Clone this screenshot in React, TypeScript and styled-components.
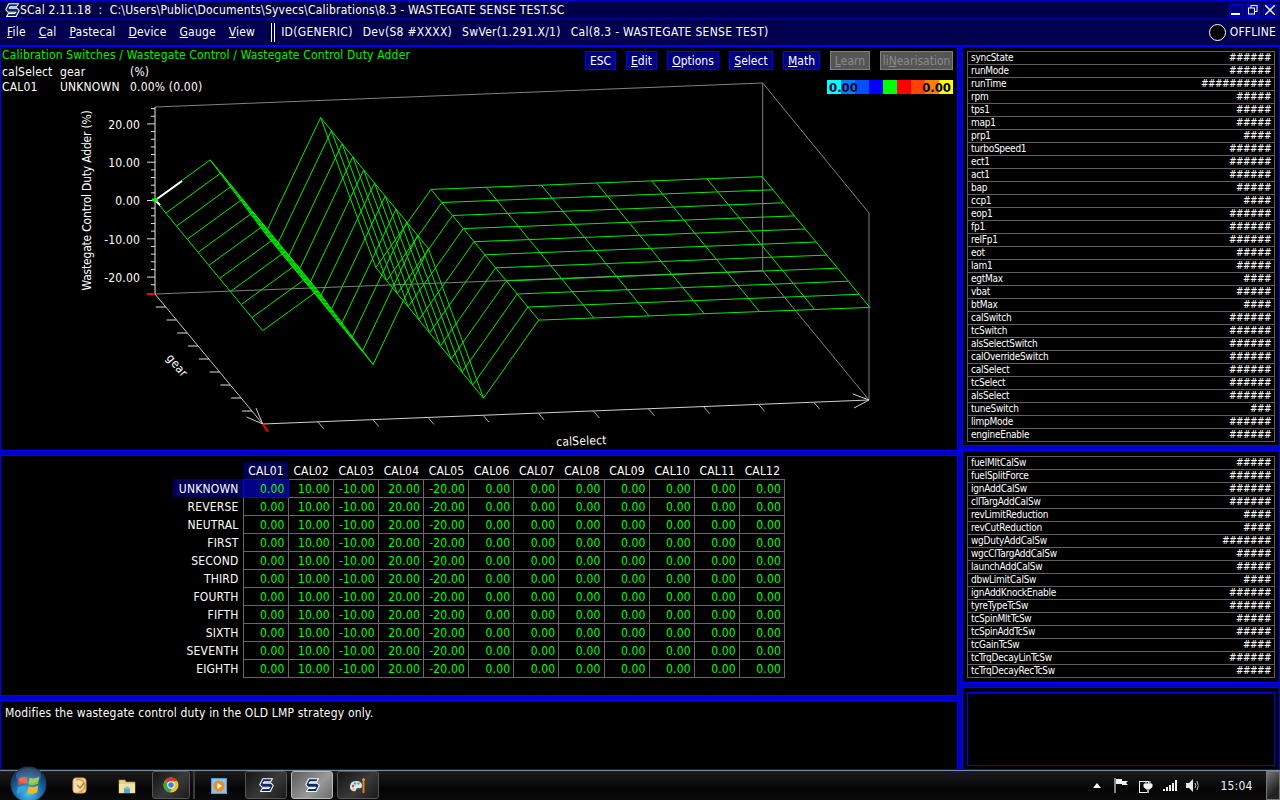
import React from "react";
import styled, { createGlobalStyle } from "styled-components";

const GlobalStyle = createGlobalStyle`
  html, body {
    margin: 0;
    padding: 0;
    background: #000;
  }
  body {
    font-family: "DejaVu Sans", "Liberation Sans", sans-serif;
    font-stretch: condensed;
    font-size: 12px;
    letter-spacing: 0.18px;
    color: #fff;
  }
`;

const Page = styled.div`
  width: 1280px;
  height: 800px;
  overflow: hidden;
  display: flex;
  flex-direction: column;
  background: #000;
`;

const TitleBar = styled.div`
  height: 19px;
  box-sizing: border-box;
  display: flex;
  align-items: center;
  padding: 1px 3px 0 5px;
  background: #000048;
  border-top: 1px solid #0000d0;
  border-bottom: 1px solid #0000a8;
`;

const TitleText = styled.span`
  white-space: pre;
  line-height: 16px;
  letter-spacing: 0.22px;
`;

const WindowButtons = styled.div`
  margin-left: auto;
  display: flex;
  gap: 3px;
`;

const WindowButton = styled.div`
  width: 14px;
  height: 13px;
  background: #000080;
  border: 1px solid #0000e0;
  box-sizing: border-box;
  display: flex;
  align-items: center;
  justify-content: center;
`;

const MenuBar = styled.div`
  height: 27px;
  box-sizing: border-box;
  display: flex;
  align-items: center;
  padding: 0 4px 0 7px;
  background: #00004e;
  border-bottom: 1px solid #0000e0;
`;

const MenuItems = styled.div`
  display: flex;
  gap: 13px;
`;

const MenuItem = styled.span`
  line-height: 16px;
`;

const MenuDivider = styled.div`
  width: 1px;
  height: 19px;
  margin: 0 6px 0 16px;
  border-left: 1px solid #fff;
  border-right: 1px solid #fff;
  padding-left: 1px;
`;

const StatusItems = styled.div`
  display: flex;
  gap: 10px;
  letter-spacing: 0.3px;
`;

const OnlineState = styled.div`
  margin-left: auto;
  display: flex;
  align-items: center;
  gap: 4px;
`;

const StateLamp = styled.div`
  width: 17px;
  height: 17px;
  box-sizing: border-box;
  border-radius: 50%;
  background: #000;
  border: 1px solid #fff;
`;

const Workspace = styled.div`
  height: 724px;
  display: flex;
  gap: 4px;
  background: #0000c8;
`;

const Column = styled.div<{ $width: number }>`
  width: ${(p) => p.$width}px;
  display: flex;
  flex-direction: column;
  gap: 4px;
`;

const Panel = styled.div<{ $height: number }>`
  height: ${(p) => p.$height}px;
  box-sizing: border-box;
  border: 1px solid #0000ff;
  background: #000;
`;

const ChartPanel = styled(Panel)`
  display: grid;
  grid-template-columns: 1fr;
  grid-template-rows: 1fr;
  & > * {
    grid-area: 1 / 1;
  }
`;

const ChartSvg = styled.svg`
  display: block;
  width: 956px;
  height: 403px;
`;

const ChartOverlay = styled.div`
  display: flex;
  justify-content: space-between;
  align-items: flex-start;
  padding: 0 4px 0 1px;
`;

const PathBlock = styled.div`
  display: flex;
  flex-direction: column;
  padding-top: 1px;
`;

const PathTitle = styled.div`
  color: #00f000;
  line-height: 14px;
  margin-bottom: 3px;
`;

const InfoGrid = styled.div`
  display: grid;
  grid-template-columns: 58px 70px auto;
  line-height: 15px;
`;

const ToolBlock = styled.div`
  display: flex;
  flex-direction: column;
  align-items: flex-end;
  padding-top: 4px;
  gap: 10px;
`;

const Toolbar = styled.div`
  display: flex;
  gap: 10px;
`;

const ToolButton = styled.div<{ $w: number; $off?: boolean }>`
  width: ${(p) => p.$w}px;
  height: 19px;
  box-sizing: border-box;
  display: flex;
  align-items: center;
  justify-content: center;
  letter-spacing: 0;
  background: ${(p) => (p.$off ? "#555" : "#000080")};
  border: 1px solid ${(p) => (p.$off ? "#808080" : "#0000ff")};
  color: ${(p) => (p.$off ? "#8c8c8c" : "#fff")};
`;

const LegendBar = styled.div`
  width: 126px;
  height: 14px;
  display: flex;
  justify-content: space-between;
  align-items: center;
  padding: 0 2px;
  box-sizing: border-box;
  color: #000030;
  font-weight: bold;
  font-size: 13px;
  letter-spacing: 0;
  background: linear-gradient(
    to right,
    #00ffff 0 14px,
    #0080ff 14px 28px,
    #0050ff 28px 42px,
    #0000ff 42px 56px,
    #00ff00 56px 70px,
    #ff0000 70px 84px,
    #ff4400 84px 98px,
    #ff8000 98px 112px,
    #ffff00 112px 126px
  );
`;

const AxisLabel = styled.text`
  fill: #fff;
  font-family: "DejaVu Sans", "Liberation Sans", sans-serif;
  font-stretch: condensed;
  font-size: 12px;
`;

const VerticalLabel = styled(AxisLabel)`
  letter-spacing: -0.2px;
`;

const TablePanel = styled(Panel)`
  display: flex;
  justify-content: center;
  padding-top: 6px;
`;

const CalTable = styled.table`
  width: 612px;
  height: 215px;
  table-layout: fixed;
  border-collapse: collapse;
  font-size: 12px;
`;

const CornerCell = styled.th`
  width: 70px;
  height: 17px;
  padding: 0;
`;

const ColHead = styled.th<{ $active?: boolean }>`
  padding: 1px 0 0 1px;
  font-weight: normal;
  text-align: center;
  background: ${(p) => (p.$active ? "#000050" : "transparent")};
`;

const RowHead = styled.th<{ $active?: boolean }>`
  padding: 1px 4px 0 0;
  height: 17px;
  font-weight: normal;
  text-align: right;
  background: ${(p) => (p.$active ? "#000058" : "transparent")};
`;

const ValueCell = styled.td<{ $active?: boolean }>`
  padding: 1px 3px 0 0;
  text-align: right;
  color: #00ff00;
  border: 1px solid ${(p) => (p.$active ? "#0000ff" : "#686868")};
  background: ${(p) => (p.$active ? "#000088" : "transparent")};
`;

const DescPanel = styled(Panel)`
  padding: 4px;
  line-height: 16px;
`;

const ListPanel = styled(Panel)<{ $top: number }>`
  padding: ${(p) => p.$top}px 4px 0;
`;

const GaugeList = styled.div`
  border: 1px solid #606060;
  border-bottom: none;
`;

const GaugeRow = styled.div`
  height: 13px;
  box-sizing: border-box;
  border-bottom: 1px solid #606060;
  display: flex;
  justify-content: space-between;
  align-items: center;
  padding: 0 3px 0 3px;
  font-size: 10px;
  line-height: 12px;
  letter-spacing: -0.25px;
`;

const GaugeHash = styled.span`
  letter-spacing: -0.55px;
`;

const EmptyPanel = styled(Panel)`
  padding: 4px 4px 0;
`;

const EmptyBox = styled.div`
  height: 74px;
  box-sizing: border-box;
  border: 1px solid #0000ff;
`;

const Taskbar = styled.div`
  height: 30px;
  box-sizing: border-box;
  display: flex;
  align-items: stretch;
  background: linear-gradient(to bottom, #1c1c20, #050505 60%, #0a0a0a);
  border-top: 1px solid #7d8aa8;
`;

const OrbSlot = styled.div`
  width: 56px;
  display: flex;
  align-items: center;
  justify-content: center;
  box-sizing: border-box;
`;

const PinSlot = styled.div<{ $w: number }>`
  width: ${(p) => p.$w}px;
  display: flex;
  align-items: center;
  justify-content: center;
`;

const TaskButton = styled.div<{ $w: number; $active?: boolean; $gap?: number }>`
  width: ${(p) => p.$w}px;
  margin-left: ${(p) => p.$gap ?? 0}px;
  margin-bottom: 1px;
  box-sizing: border-box;
  display: flex;
  align-items: center;
  justify-content: center;
  border: 1px solid ${(p) => (p.$active ? "#bbb" : "#555")};
  border-radius: 3px;
  background: ${(p) =>
    p.$active
      ? "linear-gradient(135deg, #5c5c5c, #9a9a9a 60%, #6a6a6a)"
      : "linear-gradient(135deg, #141414, #3a3a3a 55%, #1a1a1a)"};
`;

const TaskSeparator = styled.div`
  width: 2px;
  margin: 0 0 1px 3px;
  background: #3a3a3a;
`;

const Tray = styled.div`
  margin-left: auto;
  display: flex;
  align-items: center;
`;

const TrayIcon = styled.div<{ $w: number }>`
  width: ${(p) => p.$w}px;
  display: flex;
  align-items: center;
  justify-content: center;
`;

const Clock = styled.div`
  width: 62px;
  box-sizing: border-box;
  padding-left: 3px;
  text-align: center;
  font-size: 12px;
  color: #f4f4f4;
`;

const ShowDesktop = styled.div`
  width: 14px;
  align-self: stretch;
  box-sizing: border-box;
  border: 1px solid #777;
  background: linear-gradient(135deg, #777, #222 70%);
`;

const gears = ["UNKNOWN", "REVERSE", "NEUTRAL", "FIRST", "SECOND", "THIRD", "FOURTH", "FIFTH", "SIXTH", "SEVENTH", "EIGHTH"];
const cals = ["CAL01", "CAL02", "CAL03", "CAL04", "CAL05", "CAL06", "CAL07", "CAL08", "CAL09", "CAL10", "CAL11", "CAL12"];
const adders = [0, 10, -10, 20, -20, 0, 0, 0, 0, 0, 0, 0];

const gaugesTop: [string, number][] = [
  ["syncState", 6], ["runMode", 6], ["runTime", 10], ["rpm", 5], ["tps1", 5], ["map1", 5],
  ["prp1", 4], ["turboSpeed1", 6], ["ect1", 6], ["act1", 6], ["bap", 5], ["ccp1", 4],
  ["eop1", 6], ["fp1", 6], ["relFp1", 6], ["eot", 5], ["lam1", 5], ["egtMax", 4],
  ["vbat", 5], ["btMax", 4], ["calSwitch", 6], ["tcSwitch", 6], ["alsSelectSwitch", 6],
  ["calOverrideSwitch", 6], ["calSelect", 6], ["tcSelect", 6], ["alsSelect", 6],
  ["tuneSwitch", 3], ["limpMode", 6], ["engineEnable", 6],
];

const gaugesBottom: [string, number][] = [
  ["fuelMltCalSw", 5], ["fuelSplitForce", 6], ["ignAddCalSw", 6], ["cllTargAddCalSw", 6],
  ["revLimitReduction", 4], ["revCutReduction", 4], ["wgDutyAddCalSw", 7], ["wgcClTargAddCalSw", 5],
  ["launchAddCalSw", 5], ["dbwLimitCalSw", 4], ["ignAddKnockEnable", 6], ["tyreTypeTcSw", 6],
  ["tcSpinMltTcSw", 5], ["tcSpinAddTcSw", 5], ["tcGainTcSw", 4], ["tcTrqDecayLinTcSw", 6],
  ["tcTrqDecayRecTcSw", 5],
];

// screen position of a map cell in the fixed 3d view
const project = (i: number, j: number, v: number) =>
  `${(155 + 55.2 * i + 10.77 * j).toFixed(1)},${(200 - 2.12 * i + 13.07 * j - 3.8 * v).toFixed(1)}`;

const Surface = () => (
  <g fill="none" stroke="#00ec00" strokeWidth={1}>
    {gears.map((_, j) => (
      <polyline key={j} points={adders.map((v, i) => project(i, j, v)).join(" ")} />
    ))}
    {adders.map((v, i) => (
      <polyline key={i} points={gears.map((_, j) => project(i, j, v)).join(" ")} />
    ))}
  </g>
);

const Chart = () => {
  const minor: number[] = [];
  for (let k = -12; k <= 12; k++) minor.push(k);
  return (
    <ChartSvg viewBox="1 47 956 403">
      <g fill="none" stroke="#808080" strokeWidth={1}>
        <path d="M155 107L762.7 83V270.7L155 294" />
        <path d="M762.7 83L869 213V400L762.7 270.7" />
      </g>
      <Surface />
      <path d="M155 107V294" stroke="#e8e8e8" strokeWidth={1} />
      <path d="M155 294L262.7 424" stroke="#c8c8c8" strokeWidth={1} />
      <path d="M262.7 424L869 400" stroke="#d0d0d0" strokeWidth={1} />
      <g stroke="#e0e0e0" strokeWidth={1}>
        {minor.map((k) => {
          const y = 200.5 + k * 7.66;
          if (y < 108 || y > 292) return null;
          return <line key={k} x1={k % 5 === 0 ? 147 : 151} x2={155} y1={y} y2={y} />;
        })}
        {[1, 2, 3, 4, 5, 6, 7, 8, 9].map((j) => {
          const x = 155 + 10.77 * j;
          const y = 294 + 13 * j;
          return <line key={j} x1={x - 10} x2={x} y1={y} y2={y} />;
        })}
      </g>
      <g stroke="#b0b0b0" strokeWidth={1}>
        {[1, 2, 3, 4, 5, 6, 7, 8, 9, 10].map((i) => {
          const x = 262.7 + 55.1 * i;
          const y = 424 - 2.18 * i;
          return <line key={i} x1={x} x2={x + 6} y1={y} y2={y + 7} />;
        })}
      </g>
      <path d="M256 408L262.7 424L246.7 417" fill="none" stroke="#d0d0d0" strokeWidth={1} />
      <path d="M853 394L869 400L854 408" fill="none" stroke="#d0d0d0" strokeWidth={1} />
      <path d="M147 294H155" stroke="#ff0000" strokeWidth={2} />
      <path d="M262.7 424L268 431.6" stroke="#ff0000" strokeWidth={2} />
      <path d="M157 199L182 181M155 200L160 205" stroke="#fff" strokeWidth={2} />
      <path d="M152 200H158" stroke="#00ff00" strokeWidth={3} />
      {[
        ["20.00", 124],
        ["10.00", 162],
        ["0.00", 200],
        ["-10.00", 239],
        ["-20.00", 277],
      ].map(([label, y]) => (
        <AxisLabel key={label} x={140} y={Number(y) + 4.5} textAnchor="end">
          {label}
        </AxisLabel>
      ))}
      <VerticalLabel textAnchor="middle" transform="translate(91 200.5) rotate(-90)">
        Wastegate Control Duty Adder (%)
      </VerticalLabel>
      <AxisLabel textAnchor="middle" transform="translate(174 368) rotate(50)">
        gear
      </AxisLabel>
      <AxisLabel textAnchor="middle" transform="translate(581.5 445) rotate(-2)">
        calSelect
      </AxisLabel>
    </ChartSvg>
  );
};

const SLogo = ({ size = 15 }: { size?: number }) => (
  <svg width={size} height={size * 0.95} viewBox="0 0 20 19">
    <path
      d="M5 1H18L15.5 5H7L5.5 6.8H16L19 10L15 18H2L4.5 14H13L14.5 12.2H4L1 9Z"
      fill="#0b2a66"
      stroke="#fff"
      strokeWidth={1.4}
      strokeLinejoin="round"
    />
  </svg>
);

const WinOrb = () => (
  <svg width={37} height={37} viewBox="0 0 38 38" style={{ marginTop: -3 }}>
    <defs>
      <radialGradient id="orb" cx="50%" cy="75%" r="70%">
        <stop offset="0" stopColor="#4fc6f0" />
        <stop offset="0.55" stopColor="#1a6aa8" />
        <stop offset="1" stopColor="#0d2c52" />
      </radialGradient>
    </defs>
    <circle cx="19" cy="19" r="18" fill="url(#orb)" stroke="#27405f" />
    <path d="M9 13Q13 10 18 12L17 19Q12 17 8 20Z" fill="#e8502a" />
    <path d="M20 12Q25 14 30 11L29 18Q24 21 19 19Z" fill="#8cc63f" />
    <path d="M8 22Q12 19 17 21L16 28Q11 26 7 29Z" fill="#3aa0e0" />
    <path d="M19 21Q24 23 29 20L28 27Q23 30 18 28Z" fill="#f7b52c" />
    <ellipse cx="19" cy="10" rx="13" ry="8" fill="#fff" opacity="0.16" />
  </svg>
);

const TaskIcon = () => (
  <svg width={16} height={18} viewBox="0 0 16 18">
    <rect x="1" y="1" width="13" height="15" rx="3" fill="#f6dcae" stroke="#d9a25c" />
    <path d="M4 3Q11 1 13 8Q13 14 7 15" fill="none" stroke="#e09a3c" strokeWidth={1.6} />
    <path d="M5 8L8 11L12 6" fill="none" stroke="#b47a30" strokeWidth={1.4} />
  </svg>
);

const FolderIcon = () => (
  <svg width={18} height={16} viewBox="0 0 18 16">
    <path d="M1 2H7L8 4H17V15H1Z" fill="#e8cf7e" stroke="#b79b4e" strokeWidth={0.6} />
    <rect x="1" y="6" width="16" height="9" fill="#f3e3a0" />
    <path d="M6 15V11H12V15Z" fill="#5ba3d0" />
    <path d="M5 11L9 8L13 11Z" fill="#7cc0e6" />
  </svg>
);

const ChromeIcon = () => (
  <svg width={16} height={16} viewBox="0 0 16 16">
    <circle cx="8" cy="8" r="7.5" fill="#e8c32c" />
    <path d="M8 .5A7.5 7.5 0 0 1 14.5 4.2H8A3.8 3.8 0 0 0 4.7 6.1L2.3 3.1A7.5 7.5 0 0 1 8 .5Z" fill="#d9382c" />
    <path d="M2.3 3.1L5.6 9.8A3.8 3.8 0 0 0 9 11.7L6.8 15.4A7.5 7.5 0 0 1 2.3 3.1Z" fill="#3aa548" />
    <circle cx="8" cy="8" r="3.7" fill="#fff" />
    <circle cx="8" cy="8" r="2.8" fill="#3f7fe0" />
  </svg>
);

const MediaIcon = () => (
  <svg width={16} height={16} viewBox="0 0 16 16">
    <rect x=".5" y=".5" width="15" height="15" fill="#8cc4e8" stroke="#5a9ccc" />
    <circle cx="8" cy="8" r="5.5" fill="#f28a1c" />
    <path d="M6.3 5L11 8L6.3 11Z" fill="#fff" />
  </svg>
);

const PaletteIcon = () => (
  <svg width={18} height={17} viewBox="0 0 18 17">
    <path d="M1 10Q1 4 7 4Q13 4 13 9Q13 12 9 11Q7 11 7 13Q6 15 4 14Q1 13 1 10Z" fill="#dfe8f2" />
    <circle cx="4" cy="9" r="1.2" fill="#d03a2c" />
    <circle cx="6" cy="6.5" r="1.2" fill="#3a9ad0" />
    <circle cx="9.5" cy="6.5" r="1.2" fill="#6ab040" />
    <circle cx="4.5" cy="12" r="1.1" fill="#e8b830" />
    <path d="M14.5 1V16" stroke="#e8842c" strokeWidth={1.8} />
    <path d="M13 3H16" stroke="#c8a070" strokeWidth={1.4} />
  </svg>
);

const FlagIcon = () => (
  <svg width={15} height={15} viewBox="0 0 15 15">
    <path d="M1 0V15" stroke="#fff" />
    <path d="M2 1H8V3H14L12 5L14 7H8V6H2Z" fill="#f0f0f0" />
  </svg>
);

const PowerIcon = () => (
  <svg width={14} height={14} viewBox="0 0 14 14">
    <rect x=".5" y="2.5" width="9" height="11" fill="none" stroke="#f0f0f0" />
    <path d="M5 5H13V8L10.5 10H7.5L5 8Z M7 2V5M11 2V5" fill="#f0f0f0" stroke="#f0f0f0" />
    <path d="M9 10V14" stroke="#aaa" strokeWidth={2} />
  </svg>
);

const SignalIcon = () => (
  <svg width={15} height={11} viewBox="0 0 15 11" fill="#f0f0f0">
    <rect x="0" y="9" width="2" height="2" />
    <rect x="3" y="7" width="2" height="4" />
    <rect x="6" y="5" width="2" height="6" />
    <rect x="9" y="3" width="2" height="8" />
    <rect x="12" y="0" width="2" height="11" />
  </svg>
);

const SpeakerIcon = () => (
  <svg width={14} height={13} viewBox="0 0 14 13">
    <path d="M0 4H3L7 0V13L3 9H0Z" fill="#e8e8e8" />
    <path d="M9 4Q10.5 6.5 9 9M11 2Q13.5 6.5 11 11" fill="none" stroke="#bbb" />
  </svg>
);

const App = () => (
  <Page>
    <GlobalStyle />
    <TitleBar>
      <SLogo />
      <TitleText>{"SCal 2.11.18  :  C:\\Users\\Public\\Documents\\Syvecs\\Calibrations\\8.3 - WASTEGATE SENSE TEST.SC"}</TitleText>
      <WindowButtons>
        <WindowButton>
          <svg width={10} height={9} viewBox="0 0 10 9">
            <path d="M0 8H9" stroke="#fff" strokeWidth={2} />
          </svg>
        </WindowButton>
        <WindowButton>
          <svg width={10} height={10} viewBox="0 0 10 10" fill="none" stroke="#fff">
            <rect x="3" y=".5" width="6" height="6" />
            <rect x=".5" y="3" width="6" height="6" fill="#000080" />
          </svg>
        </WindowButton>
        <WindowButton>
          <svg width={10} height={10} viewBox="0 0 10 10">
            <path d="M0 0L10 10M10 0L0 10" stroke="#fff" strokeWidth={1.4} />
          </svg>
        </WindowButton>
      </WindowButtons>
    </TitleBar>
    <MenuBar>
      <MenuItems>
        <MenuItem><u>F</u>ile</MenuItem>
        <MenuItem><u>C</u>al</MenuItem>
        <MenuItem><u>P</u>astecal</MenuItem>
        <MenuItem><u>D</u>evice</MenuItem>
        <MenuItem><u>G</u>auge</MenuItem>
        <MenuItem><u>V</u>iew</MenuItem>
      </MenuItems>
      <MenuDivider />
      <StatusItems>
        <span>ID(GENERIC)</span>
        <span>Dev(S8 #XXXX)</span>
        <span>SwVer(1.291.X/1)</span>
        <span>Cal(8.3 - WASTEGATE SENSE TEST)</span>
      </StatusItems>
      <OnlineState>
        <StateLamp />
        <span>OFFLINE</span>
      </OnlineState>
    </MenuBar>
    <Workspace>
      <Column $width={958}>
        <ChartPanel $height={405}>
          <Chart />
          <ChartOverlay>
            <PathBlock>
              <PathTitle>Calibration Switches / Wastegate Control / Wastegate Control Duty Adder</PathTitle>
              <InfoGrid>
                <span>calSelect</span>
                <span>gear</span>
                <span>(%)</span>
                <span>CAL01</span>
                <span>UNKNOWN</span>
                <span>0.00% (0.00)</span>
              </InfoGrid>
            </PathBlock>
            <ToolBlock>
              <Toolbar>
                <ToolButton $w={31}>ESC</ToolButton>
                <ToolButton $w={31}><u>E</u>dit</ToolButton>
                <ToolButton $w={52}><u>O</u>ptions</ToolButton>
                <ToolButton $w={44}><u>S</u>elect</ToolButton>
                <ToolButton $w={37}><u>M</u>ath</ToolButton>
                <ToolButton $w={40} $off><u>L</u>earn</ToolButton>
                <ToolButton $w={73} $off>li<u>N</u>earisation</ToolButton>
              </Toolbar>
              <LegendBar>
                <span>0.00</span>
                <span>0.00</span>
              </LegendBar>
            </ToolBlock>
          </ChartOverlay>
        </ChartPanel>
        <TablePanel $height={241}>
          <CalTable>
            <thead>
              <tr>
                <CornerCell />
                {cals.map((c, i) => (
                  <ColHead key={c} $active={i === 0}>{c}</ColHead>
                ))}
              </tr>
            </thead>
            <tbody>
              {gears.map((g, j) => (
                <tr key={g}>
                  <RowHead $active={j === 0}>{g}</RowHead>
                  {adders.map((v, i) => (
                    <ValueCell key={i} $active={i === 0 && j === 0}>{v.toFixed(2)}</ValueCell>
                  ))}
                </tr>
              ))}
            </tbody>
          </CalTable>
        </TablePanel>
        <DescPanel $height={70}>Modifies the wastegate control duty in the OLD LMP strategy only.</DescPanel>
      </Column>
      <Column $width={318}>
        <ListPanel $height={400} $top={4}>
          <GaugeList>
            {gaugesTop.map(([name, n]) => (
              <GaugeRow key={name}>
                <span>{name}</span>
                <GaugeHash>{"#".repeat(n)}</GaugeHash>
              </GaugeRow>
            ))}
          </GaugeList>
        </ListPanel>
        <ListPanel $height={233} $top={5}>
          <GaugeList>
            {gaugesBottom.map(([name, n]) => (
              <GaugeRow key={name}>
                <span>{name}</span>
                <GaugeHash>{"#".repeat(n)}</GaugeHash>
              </GaugeRow>
            ))}
          </GaugeList>
        </ListPanel>
        <EmptyPanel $height={83}>
          <EmptyBox />
        </EmptyPanel>
      </Column>
    </Workspace>
    <Taskbar>
      <OrbSlot><WinOrb /></OrbSlot>
      <PinSlot $w={48}><TaskIcon /></PinSlot>
      <PinSlot $w={46}><FolderIcon /></PinSlot>
      <TaskButton $w={38} $gap={2}><ChromeIcon /></TaskButton>
      <TaskSeparator />
      <PinSlot $w={48}><MediaIcon /></PinSlot>
      <TaskButton $w={42} $gap={2}><SLogo /></TaskButton>
      <TaskButton $w={42} $gap={4} $active><SLogo /></TaskButton>
      <TaskButton $w={42} $gap={4}><PaletteIcon /></TaskButton>
      <Tray>
        <TrayIcon $w={24}>
          <svg width={8} height={5} viewBox="0 0 8 5"><path d="M0 5L4 0L8 5Z" fill="#fff" /></svg>
        </TrayIcon>
        <TrayIcon $w={25}><FlagIcon /></TrayIcon>
        <TrayIcon $w={24}><PowerIcon /></TrayIcon>
        <TrayIcon $w={24}><SignalIcon /></TrayIcon>
        <TrayIcon $w={22}><SpeakerIcon /></TrayIcon>
        <Clock>15:04</Clock>
        <ShowDesktop />
      </Tray>
    </Taskbar>
  </Page>
);

export default App;
